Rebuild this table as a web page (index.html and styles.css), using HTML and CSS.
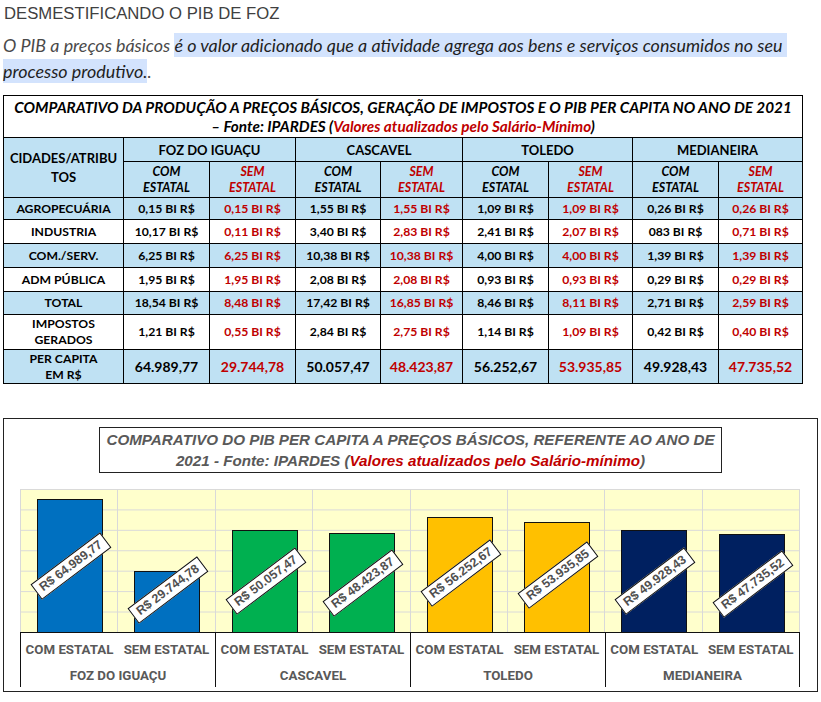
FILE: index.html
```html
<!DOCTYPE html>
<html lang="pt-BR">
<head>
<meta charset="utf-8">
<link rel="stylesheet" href="styles.css">
</head>
<body>
<div class="page">
  <h1 class="doc-title">DESMESTIFICANDO O PIB DE FOZ</h1>
  <p class="lead"><span class="plain">O PIB a preços básicos </span><mark>é o valor adicionado que a atividade agrega aos bens e serviços consumidos no seu&nbsp;</mark> <mark>processo produtivo.</mark><span class="plain">.</span></p>

  <table class="pib">
    <colgroup>
      <col class="c-attr"><col class="c86"><col class="c86"><col class="c85"><col class="c82"><col class="c86"><col class="c84"><col class="c86"><col class="c84">
    </colgroup>
    <tr class="row-cap">
      <td colspan="9" class="cap">COMPARATIVO DA PRODUÇÃO A PREÇOS BÁSICOS, GERAÇÃO DE IMPOSTOS E O PIB PER CAPITA NO ANO DE 2021<br>– Fonte: IPARDES (<span class="r">Valores atualizados pelo Salário-Mínimo</span>)</td>
    </tr>
    <tr class="blue row-city">
      <td rowspan="2" class="attr-head">CIDADES/ATRIBU<br>TOS</td>
      <td colspan="2">FOZ DO IGUAÇU</td>
      <td colspan="2">CASCAVEL</td>
      <td colspan="2">TOLEDO</td>
      <td colspan="2">MEDIANEIRA</td>
    </tr>
    <tr class="row-sub">
      <td class="sub">COM<br>ESTATAL</td><td class="sub r">SEM<br>ESTATAL</td>
      <td class="sub">COM<br>ESTATAL</td><td class="sub r">SEM<br>ESTATAL</td>
      <td class="sub">COM<br>ESTATAL</td><td class="sub r">SEM<br>ESTATAL</td>
      <td class="sub">COM<br>ESTATAL</td><td class="sub r">SEM<br>ESTATAL</td>
    </tr>
    <tr class="blue row-data row-first">
      <td>AGROPECUÁRIA</td><td>0,15 BI R$</td><td class="r">0,15 BI R$</td><td>1,55 BI R$</td><td class="r">1,55 BI R$</td><td>1,09 BI R$</td><td class="r">1,09 BI R$</td><td>0,26 BI R$</td><td class="r">0,26 BI R$</td>
    </tr>
    <tr class="row-data">
      <td>INDUSTRIA</td><td>10,17 BI R$</td><td class="r">0,11 BI R$</td><td>3,40 BI R$</td><td class="r">2,83 BI R$</td><td>2,41 BI R$</td><td class="r">2,07 BI R$</td><td>083 BI R$</td><td class="r">0,71 BI R$</td>
    </tr>
    <tr class="blue row-data">
      <td>COM./SERV.</td><td>6,25 BI R$</td><td class="r">6,25 BI R$</td><td>10,38 BI R$</td><td class="r">10,38 BI R$</td><td>4,00 BI R$</td><td class="r">4,00 BI R$</td><td>1,39 BI R$</td><td class="r">1,39 BI R$</td>
    </tr>
    <tr class="row-data">
      <td>ADM PÚBLICA</td><td>1,95 BI R$</td><td class="r">1,95 BI R$</td><td>2,08 BI R$</td><td class="r">2,08 BI R$</td><td>0,93 BI R$</td><td class="r">0,93 BI R$</td><td>0,29 BI R$</td><td class="r">0,29 BI R$</td>
    </tr>
    <tr class="blue row-data row-total">
      <td>TOTAL</td><td>18,54 BI R$</td><td class="r">8,48 BI R$</td><td>17,42 BI R$</td><td class="r">16,85 BI R$</td><td>8,46 BI R$</td><td class="r">8,11 BI R$</td><td>2,71 BI R$</td><td class="r">2,59 BI R$</td>
    </tr>
    <tr class="row-tall">
      <td>IMPOSTOS<br>GERADOS</td><td>1,21 BI R$</td><td class="r">0,55 BI R$</td><td>2,84 BI R$</td><td class="r">2,75 BI R$</td><td>1,14 BI R$</td><td class="r">1,09 BI R$</td><td>0,42 BI R$</td><td class="r">0,40 BI R$</td>
    </tr>
    <tr class="blue row-pc">
      <td>PER CAPITA<br>EM R$</td><td>64.989,77</td><td class="r">29.744,78</td><td>50.057,47</td><td class="r">48.423,87</td><td>56.252,67</td><td class="r">53.935,85</td><td>49.928,43</td><td class="r">47.735,52</td>
    </tr>
  </table>

  <div class="chart">
    <div class="chart-title">COMPARATIVO DO PIB PER CAPITA A PREÇOS BÁSICOS, REFERENTE AO ANO DE<br>2021 - Fonte: IPARDES (<span class="red">Valores atualizados pelo Salário-mínimo</span>)</div>
    <div class="plot">
      <div class="col"><div class="bar b-blue" style="height:133px"></div><span class="dlabel" style="bottom:66px">R$ 64.989,77</span></div>
      <div class="col"><div class="bar b-blue" style="height:61px"></div><span class="dlabel" style="bottom:42px">R$ 29.744,78</span></div>
      <div class="col"><div class="bar b-green" style="height:102px"></div><span class="dlabel" style="bottom:51px">R$ 50.057,47</span></div>
      <div class="col"><div class="bar b-green" style="height:99px"></div><span class="dlabel" style="bottom:49px">R$ 48.423,87</span></div>
      <div class="col"><div class="bar b-gold" style="height:115px"></div><span class="dlabel" style="bottom:59px">R$ 56.252,67</span></div>
      <div class="col"><div class="bar b-gold" style="height:110px"></div><span class="dlabel" style="bottom:57px">R$ 53.935,85</span></div>
      <div class="col"><div class="bar b-navy" style="height:102px"></div><span class="dlabel" style="bottom:51px">R$ 49.928,43</span></div>
      <div class="col"><div class="bar b-navy" style="height:98px"></div><span class="dlabel" style="bottom:48px">R$ 47.735,52</span></div>
    </div>
    <div class="axis">
      <div class="grp"><div class="cats"><span>COM ESTATAL</span><span>SEM ESTATAL</span></div><div class="city">FOZ DO IGUAÇU</div></div>
      <div class="grp"><div class="cats"><span>COM ESTATAL</span><span>SEM ESTATAL</span></div><div class="city">CASCAVEL</div></div>
      <div class="grp"><div class="cats"><span>COM ESTATAL</span><span>SEM ESTATAL</span></div><div class="city">TOLEDO</div></div>
      <div class="grp"><div class="cats"><span>COM ESTATAL</span><span>SEM ESTATAL</span></div><div class="city">MEDIANEIRA</div></div>
    </div>
  </div>
</div>
</body>
</html>
```

FILE: styles.css
```css
* { box-sizing: border-box; }
html, body { margin: 0; background: #fff; }
body { font-family: "Liberation Sans", Arial, sans-serif; }

.page { width: 821px; padding: 0 4px 0 3px; }

.doc-title {
  margin: 0;
  padding: 3px 0 0 1px;
  font: 400 16.7px/22px "Liberation Sans", Arial, sans-serif;
  color: #404040;
}

.lead {
  margin: 7px 0 0;
  font: italic 400 17.9px/26px Lato, sans-serif;
  color: #4a4a4a;
}
.lead mark {
  background: #d3e3fd;
  color: #1f1f1f;
  padding: 1px 0;
}

/* ---------- table ---------- */
.pib {
  border-collapse: collapse;
  table-layout: fixed;
  width: 799px;
  margin-top: 11px;
  font-family: Lato, sans-serif;
  font-weight: 700;
  font-size: 12.2px;
  color: #000;
  text-align: center;
}
.pib col.c-attr { width: 120px; }
.pib col.c86 { width: 86px; }
.pib col.c85 { width: 85px; }
.pib col.c84 { width: 84px; }
.pib col.c82 { width: 82px; }
.pib td { border: 1px solid #000; padding: 0; vertical-align: middle; line-height: 16px; }
.pib .r { color: #c00000; }
.pib .blue td, .pib .row-sub td { background: #bfe1f3; }
.pib .cap {
  background: #fff;
  font-style: italic;
  font-size: 15.3px;
  line-height: 19px;
  padding: 2px 0 1px;
  height: 42px;
}
.pib .row-city td { height: 24px; font-size: 13px; }
.pib .attr-head { line-height: 19px; font-size: 12px; }
.pib .sub { font-style: italic; height: 36px; line-height: 16px; font-size: 12.5px; }
.pib .row-data td { height: 24px; }
.pib .row-first td { height: 22px; }
.pib .row-total td { height: 23px; }
.pib .row-tall td { height: 35px; }
.pib .row-pc td { height: 34px; }
.pib .row-pc td + td { font-size: 14px; }

/* ---------- chart ---------- */
.chart {
  margin-top: 34px;
  width: 815px;
  height: 274px;
  border: 1px solid #222;
  padding-top: 8px;
}
.chart-title {
  width: 623px;
  height: 46px;
  margin: 0 auto;
  border: 1px solid #222;
  text-align: center;
  font: italic 700 15.2px/21px "Liberation Sans", Arial, sans-serif;
  color: #595959;
  padding-top: 1px;
}
.chart-title .red { color: #c00000; }

.plot {
  margin: 16px 0 0 16px;
  width: 780px;
  height: 143px;
  display: grid;
  grid-template-columns: repeat(8, 1fr);
  background-color: #ffffcc;
  background-image: linear-gradient(to bottom, #d9d9d9 1px, transparent 1px);
  background-size: 100% 20.43px;
  border-right: 1px solid #d9d9d9;
}
.col {
  position: relative;
  border-left: 1px solid #d9d9d9;
  padding-left: 16px;
  display: flex;
  align-items: flex-end;
}
.bar {
  width: 66px;
  border: 1px solid #111;
  border-bottom: 0;
}
.b-blue { background: #0070c0; }
.b-green { background: #00b050; }
.b-gold { background: #ffc000; }
.b-navy { background: #002060; }
.dlabel {
  position: absolute;
  left: 50px;
  transform: translate(-50%, 50%) rotate(-37deg);
  background: #fff;
  border: 1px solid #111;
  padding: 1px 5px;
  white-space: nowrap;
  font: 700 12.5px/15px "Liberation Sans", Arial, sans-serif;
  color: #505050;
}

.axis {
  margin-left: 16px;
  width: 780px;
  border-top: 1px solid #111;
  display: grid;
  grid-template-columns: repeat(4, 1fr);
  height: 54px;
}
.grp { border-left: 1px solid #111; display: flex; flex-direction: column; }
.grp:last-child { border-right: 1px solid #111; }
.cats { display: grid; grid-template-columns: 1fr 1fr; height: 34px; align-items: center; }
.cats span, .city {
  text-align: center;
  font: 700 13.3px/16px Roboto, "Liberation Sans", sans-serif;
  color: #595959;
  white-space: nowrap;
}
.city { height: 20px; line-height: 18px; }
```
